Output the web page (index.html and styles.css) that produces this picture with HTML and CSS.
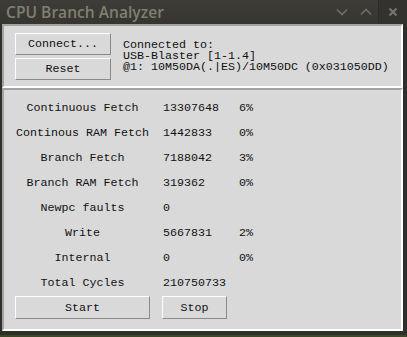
FILE: index.html
```html
<!DOCTYPE html>
<html lang="en">
<head>
<meta charset="UTF-8">
<meta name="viewport" content="width=device-width, initial-scale=1.0">
<title>CPU Branch Analyzer</title>
<link rel="stylesheet" href="styles.css">
</head>
<body>

<div class="window">
  <div class="titlebar">
    <span class="title">CPU Branch Analyzer</span>
    <div class="controls">
      <span class="ctl">
        <svg width="12" height="8" viewBox="0 0 12 8"><path d="M1 1.5 L6 6.5 L11 1.5" fill="none" stroke="#6f6f69" stroke-width="1.6"/></svg>
      </span>
      <span class="ctl">
        <svg width="12" height="8" viewBox="0 0 12 8"><path d="M1 6.5 L6 1.5 L11 6.5" fill="none" stroke="#6f6f69" stroke-width="1.6"/></svg>
      </span>
      <span class="ctl close">
        <svg width="10" height="10" viewBox="0 0 10 10"><path d="M1.5 1.5 L8.5 8.5 M8.5 1.5 L1.5 8.5" fill="none" stroke="#77776f" stroke-width="2"/></svg>
      </span>
    </div>
  </div>

  <div class="body">
    <div class="frame conn">
      <div class="btns">
        <div class="btn">Connect...</div>
        <div class="btn">Reset</div>
      </div>
      <div class="info">
        <div>Connected to:</div>
        <div>USB-Blaster [1-1.4]</div>
        <div>@1: 10M50DA(.|ES)/10M50DC (0x031050DD)</div>
      </div>
    </div>

    <div class="frame stats">
      <div class="lbl">Continuous Fetch</div><div class="val">13307648</div><div class="pct">6%</div>
      <div class="lbl">Continous RAM Fetch</div><div class="val">1442833</div><div class="pct">0%</div>
      <div class="lbl">Branch Fetch</div><div class="val">7188042</div><div class="pct">3%</div>
      <div class="lbl">Branch RAM Fetch</div><div class="val">319362</div><div class="pct">0%</div>
      <div class="lbl">Newpc faults</div><div class="val">0</div><div class="pct"></div>
      <div class="lbl">Write</div><div class="val">5667831</div><div class="pct">2%</div>
      <div class="lbl">Internal</div><div class="val">0</div><div class="pct">0%</div>
      <div class="lbl">Total Cycles</div><div class="val">210750733</div><div class="pct"></div>
      <div class="cell"><div class="btn start">Start</div></div>
      <div class="cell"><div class="btn stop">Stop</div></div>
      <div class="cell"></div>
    </div>
  </div>
</div>

</body>
</html>
```
FILE: styles.css
```css
*{
  margin: 0;
  padding: 0;
  box-sizing: border-box;
}
body{
  width: 407px;
  height: 337px;
  overflow: hidden;
  background: #2d2f2a;
}
.window{
  width: 407px;
  height: 337px;
  background: #2f302c;
  display: flex;
  flex-direction: column;
  border-bottom: 2px solid #3b4a25;
}
.titlebar{
  height: 24px;
  background: linear-gradient(#3d3c38, #36352f);
  display: flex;
  align-items: center;
  justify-content: space-between;
  padding-left: 6px;
}
.title{
  font-family: "Open Sans", "DejaVu Sans", sans-serif;
  font-weight: 600;
  font-size: 15.6px;
  color: #807f72;
}
.controls{
  display: flex;
  align-items: center;
  height: 24px;
}
.ctl{
  width: 24px;
  height: 24px;
  display: flex;
  align-items: center;
  justify-content: center;
}
.close{
  width: 29px;
  background: #33322e;
  border-left: 1px solid #2c2b28;
}
.body{
  flex: 1;
  margin: 0 4px 4px 2px;
  background: #d9d9d9;
  display: flex;
  flex-direction: column;
  font-family: "Liberation Mono", "DejaVu Sans Mono", monospace;
  font-size: 11.67px;
  color: #111;
}
.frame{
  border: 2px solid;
  border-color: #a3a3a3 #ffffff #ffffff #a3a3a3;
}
.conn{
  height: 64px;
  display: flex;
  align-items: center;
  padding: 0 0 0 11px;
}
.btns{
  display: flex;
  flex-direction: column;
  gap: 3px;
  width: 96px;
}
.btn{
  height: 22px;
  display: flex;
  align-items: center;
  justify-content: center;
  background: #d9d9d9;
  border: 1px solid;
  border-color: #ffffff #8a8a8a #8a8a8a #ffffff;
}
.info{
  margin-left: 12px;
  margin-top: 1px;
}
.info div{
  height: 11px;
  line-height: 11px;
}
.stats{
  flex: 1;
  display: grid;
  grid-template-columns: 149px 74px 1fr;
  grid-auto-rows: 25px;
  padding: 5px 0 0 4px;
  align-items: center;
}
.lbl{
  text-align: center;
}
.val{
  padding-left: 6px;
}
.pct{
  padding-left: 8px;
}
.cell{
  height: 27px;
  display: flex;
  align-items: center;
}
.start{
  width: 135px;
  height: 23px;
  margin-left: 7px;
}
.stop{
  width: 65px;
  height: 23px;
  margin-left: 5px;
}
```
